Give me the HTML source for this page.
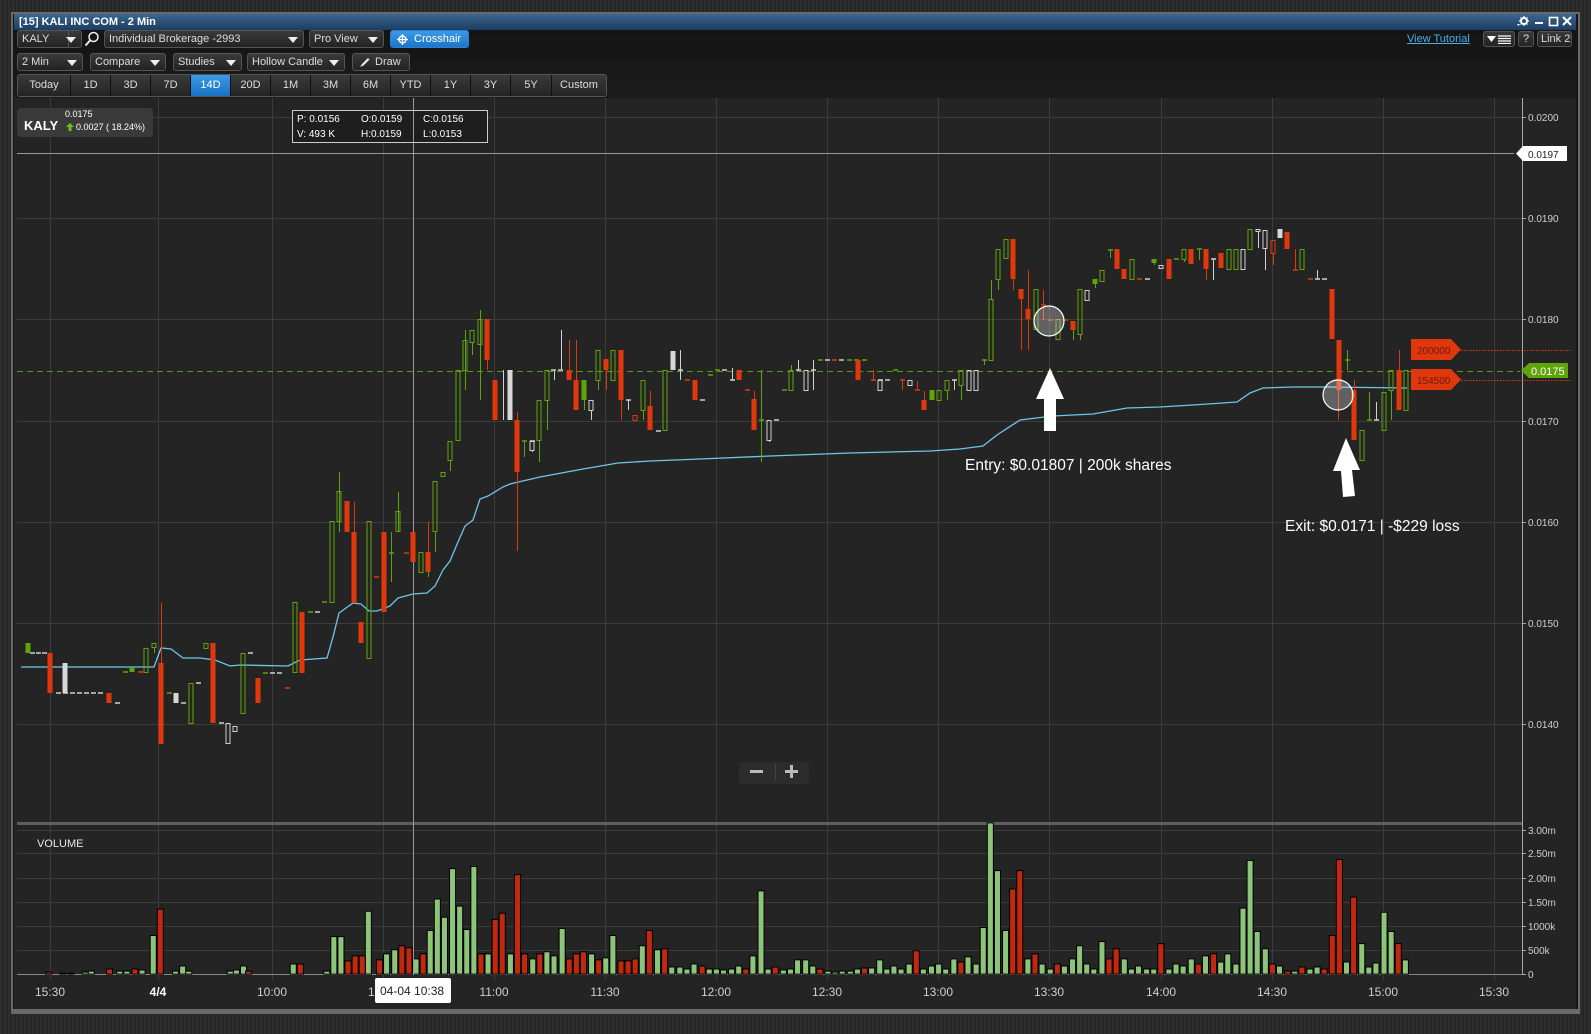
<!DOCTYPE html>
<html><head><meta charset="utf-8"><style>
*{margin:0;padding:0;box-sizing:border-box}
body{width:1591px;height:1034px;overflow:hidden;font-family:"Liberation Sans",Arial,sans-serif;background:repeating-linear-gradient(90deg,#2e2e2e 0,#2e2e2e 2px,#262626 2px,#262626 4px);position:relative}
.abs{position:absolute}
.win{left:11px;top:12px;width:1569px;height:1002px;border:2px solid #6a6a6a;background:#151515}
.title{left:14px;top:14px;width:1562px;height:16px;background:linear-gradient(#3a6690,#1c3d60);color:#fff;font-size:11px;font-weight:bold;line-height:16px;padding-left:5px}
.tb{left:14px;top:30px;width:1562px;height:68px;background:linear-gradient(#141414,#1c1c1c)}
.btn{position:absolute;height:18px;border:1px solid #555;border-radius:3px;background:linear-gradient(#3a3a3a,#232323);color:#ddd;font-size:11px;line-height:16px;padding-left:4px;white-space:nowrap}
.dd::after{content:"";position:absolute;right:5px;top:6px;border-left:5px solid transparent;border-right:5px solid transparent;border-top:6px solid #eee}
.seg{position:absolute;top:75px;height:21px;border-right:1px solid #111;background:linear-gradient(#3a3a3a,#242424);color:#ddd;font-size:11px;line-height:21px;text-align:center}
</style></head><body>
<div class="abs win"></div>
<div class="abs title">[15] KALI INC COM - 2 Min</div>
<svg class="abs" style="left:1510px;top:14px" width="66" height="16">
<g fill="#fff" stroke="#fff"><circle cx="14" cy="7" r="3" fill="none" stroke-width="2"/><path d="M14 2v2M14 10v2M9 7h2M17 7h2M10.5 3.5l1.5 1.5M16 9l1.5 1.5M17.5 3.5L16 5M12 9l-1.5 1.5" stroke-width="1.2"/><path d="M7 10l3 0-1.5 2z" stroke="none"/>
<rect x="25" y="8" width="8" height="2" stroke="none"/><rect x="39.5" y="3.5" width="8" height="8" fill="none" stroke-width="1.6"/><path d="M53 3l8 8M61 3l-8 8" stroke-width="2"/></g></svg>
<div class="abs tb"></div>
<div class="btn dd" style="left:17px;top:30px;width:65px">KALY<span style="position:absolute;left:50px;top:0;height:16px;border-left:1px solid #555"></span></div>
<svg class="abs" style="left:84px;top:31px" width="16" height="16"><circle cx="9.5" cy="6" r="4.5" fill="none" stroke="#eee" stroke-width="1.5"/><path d="M6.5 9l-5 5.5" stroke="#eee" stroke-width="2"/></svg>
<div class="btn dd" style="left:104px;top:30px;width:200px">Individual Brokerage -2993</div>
<div class="btn dd" style="left:309px;top:30px;width:75px">Pro View</div>
<div class="btn" style="left:390px;top:30px;width:79px;background:linear-gradient(#3a9ae8,#1d74c8);border-color:#2a80d0;color:#fff;padding-left:0">
<svg style="position:absolute;left:6px;top:3px" width="11" height="11"><circle cx="5.5" cy="5.5" r="3.5" fill="none" stroke="#fff" stroke-width="1.4"/><path d="M5.5 0v11M0 5.5h11" stroke="#fff" stroke-width="1.2"/></svg><span style="position:absolute;left:23px">Crosshair</span></div>
<div class="abs" style="left:1407px;top:33px;color:#4ab0e8;font-size:11px;text-decoration:underline">View Tutorial</div>
<div class="btn" style="left:1483px;top:31px;width:32px;height:16px"><svg style="position:absolute;left:3px;top:3px" width="26" height="9"><path d="M0 1h9L4.5 7z" fill="#fff"/><path d="M11 1h13M11 3.5h13M11 6h13M11 8.5h13" stroke="#fff" stroke-width="1.2"/></svg></div>
<div class="btn" style="left:1518px;top:31px;width:16px;height:16px;padding-left:4px;line-height:14px">?</div>
<div class="btn" style="left:1537px;top:31px;width:35px;height:16px;padding-left:3px;line-height:14px">Link 2</div>
<div class="btn dd" style="left:17px;top:53px;width:66px">2 Min</div>
<div class="btn dd" style="left:90px;top:53px;width:76px">Compare</div>
<div class="btn dd" style="left:173px;top:53px;width:69px">Studies</div>
<div class="btn dd" style="left:247px;top:53px;width:98px">Hollow Candle</div>
<div class="btn" style="left:352px;top:53px;width:58px;padding-left:22px">Draw<svg style="position:absolute;left:6px;top:3px" width="11" height="11"><path d="M1 10l2-3 6-6 1.5 1.5-6 6z" fill="#eee"/></svg></div>
<div class="abs" style="left:17px;top:74px;width:590px;height:23px;border:1px solid #555;border-radius:3px;background:#222"></div>
<div class="seg" style="left:18px;width:53px">Today</div><div class="seg" style="left:71px;width:40px">1D</div><div class="seg" style="left:111px;width:40px">3D</div><div class="seg" style="left:151px;width:40px">7D</div><div class="seg" style="left:191px;width:40px;background:linear-gradient(#3a9ae8,#1a70c4);color:#fff">14D</div><div class="seg" style="left:231px;width:40px">20D</div><div class="seg" style="left:271px;width:40px">1M</div><div class="seg" style="left:311px;width:40px">3M</div><div class="seg" style="left:351px;width:40px">6M</div><div class="seg" style="left:391px;width:40px">YTD</div><div class="seg" style="left:431px;width:40px">1Y</div><div class="seg" style="left:471px;width:40px">3Y</div><div class="seg" style="left:511px;width:41px">5Y</div><div class="seg" style="left:552px;width:54px;border-right:none">Custom</div>

<svg class="abs" style="left:0;top:0" width="1591" height="1034" font-family="Liberation Sans, Arial, sans-serif">
<rect x="14" y="98" width="1562" height="912" fill="#242424"/>
<rect x="11" y="1009" width="1569" height="3" fill="#6a6a6a"/>
<g stroke="#3c3c3c" stroke-width="1">
<path d="M17 117.5H1522M17 218.5H1522M17 319.5H1522M17 421.5H1522M17 522.5H1522M17 623.5H1522M17 724.5H1522"/>
<path d="M17 830.5H1522M17 853.5H1522M17 878.5H1522M17 902.5H1522M17 926.5H1522M17 950.5H1522"/>
<path d="M50.5 98V980M158.5 98V980M272.5 98V980M383.5 98V980M494.5 98V980M605.5 98V980M716.5 98V980M827.5 98V980M938.5 98V980M1049.5 98V980M1161.5 98V980M1272.5 98V980M1383.5 98V980M1494.5 98V980"/>
</g>
<rect x="17" y="822" width="1505" height="3" fill="#5e5e5e"/>
<path d="M17 974.5H1522" stroke="#888"/>
<path d="M1522.5 98V975" stroke="#aaa"/>
<g stroke="#aaa"><path d="M1522 117.5h4M1522 218.5h4M1522 319.5h4M1522 421.5h4M1522 522.5h4M1522 623.5h4M1522 724.5h4M1522 830.5h4M1522 853.5h4M1522 878.5h4M1522 902.5h4M1522 926.5h4M1522 950.5h4M1522 974.5h4"/></g>
<g fill="#cfcfcf" font-size="10">
<text x="1528" y="121">0.0200</text><text x="1528" y="222">0.0190</text><text x="1528" y="323">0.0180</text><text x="1528" y="425">0.0170</text><text x="1528" y="526">0.0160</text><text x="1528" y="627">0.0150</text><text x="1528" y="728">0.0140</text>
<text x="1528" y="834">3.00m</text><text x="1528" y="857">2.50m</text><text x="1528" y="882">2.00m</text><text x="1528" y="906">1.50m</text><text x="1528" y="930">1000k</text><text x="1528" y="954">500k</text><text x="1528" y="978">0</text>
</g>
<g fill="#cfcfcf" font-size="12" text-anchor="middle">
<text x="50" y="996">15:30</text><text x="158" y="996" fill="#fff" font-weight="bold">4/4</text><text x="272" y="996">10:00</text><text x="383" y="996">10:30</text><text x="494" y="996">11:00</text><text x="605" y="996">11:30</text><text x="716" y="996">12:00</text><text x="827" y="996">12:30</text><text x="938" y="996">13:00</text><text x="1049" y="996">13:30</text><text x="1161" y="996">14:00</text><text x="1272" y="996">14:30</text><text x="1383" y="996">15:00</text><text x="1494" y="996">15:30</text>
</g>
<text x="37" y="847" fill="#e8e8e8" font-size="11">VOLUME</text>

<!-- volume bars -->
<g transform="scale(1.0147)" stroke="#000" stroke-width="1">
<g fill="#8cc47a">
<path d="M59 959h6v1h-6zM67 959h6v1h-6zM81 958h6v2h-6zM87 957h6v3h-6zM115 957h6v3h-6zM122 957h6v3h-6zM137 956h6v4h-6zM148 922h6v38h-6zM170 957h6v3h-6zM177 952h6v8h-6zM183 957h6v3h-6zM224 957h6v3h-6zM230 956h6v4h-6zM237 952h6v8h-6zM286 950h6v10h-6zM319 957h6v3h-6zM326 923h6v37h-6zM333 923h6v37h-6zM360 898h6v62h-6zM378 940h6v20h-6zM386 936h6v24h-6zM407 945h6v15h-6zM421 917h6v43h-6zM428 886h6v74h-6zM435 904h6v56h-6zM443 856h6v104h-6zM450 893h6v67h-6zM457 916h6v44h-6zM464 854h6v106h-6zM478 940h6v20h-6zM500 940h6v20h-6zM522 945h6v15h-6zM536 938h6v22h-6zM543 942h6v18h-6zM551 915h6v45h-6zM580 940h6v20h-6zM594 944h6v16h-6zM601 922h6v38h-6zM630 932h6v28h-6zM645 936h6v24h-6zM659 953h6v7h-6zM667 953h6v7h-6zM674 955h6v5h-6zM681 950h6v10h-6zM696 955h6v5h-6zM703 955h6v5h-6zM710 956h6v4h-6zM718 955h6v5h-6zM725 952h6v8h-6zM739 942h6v18h-6zM747 878h6v82h-6zM754 955h6v5h-6zM769 956h6v4h-6zM776 955h6v5h-6zM783 946h6v14h-6zM791 946h6v14h-6zM798 952h6v8h-6zM813 957h6v3h-6zM820 958h6v2h-6zM827 957h6v3h-6zM835 957h6v3h-6zM842 955h6v5h-6zM856 954h6v6h-6zM864 946h6v14h-6zM871 955h6v5h-6zM878 952h6v8h-6zM885 955h6v5h-6zM893 950h6v10h-6zM907 955h6v5h-6zM915 952h6v8h-6zM922 950h6v10h-6zM929 955h6v5h-6zM937 945h6v15h-6zM951 943h6v17h-6zM959 950h6v10h-6zM966 914h6v46h-6zM973 811h6v149h-6zM980 858h6v102h-6zM988 917h6v43h-6zM1010 945h6v15h-6zM1024 950h6v10h-6zM1032 955h6v5h-6zM1046 952h6v8h-6zM1054 945h6v15h-6zM1061 932h6v28h-6zM1068 950h6v10h-6zM1075 955h6v5h-6zM1083 928h6v32h-6zM1105 945h6v15h-6zM1112 955h6v5h-6zM1119 952h6v8h-6zM1127 955h6v5h-6zM1134 955h6v5h-6zM1149 955h6v5h-6zM1156 950h6v10h-6zM1163 952h6v8h-6zM1171 945h6v15h-6zM1185 942h6v18h-6zM1200 948h6v12h-6zM1207 940h6v20h-6zM1215 950h6v10h-6zM1222 895h6v65h-6zM1229 848h6v112h-6zM1236 918h6v42h-6zM1244 935h6v25h-6zM1258 952h6v8h-6zM1273 957h6v3h-6zM1288 955h6v5h-6zM1295 953h6v7h-6zM1324 948h6v12h-6zM1339 930h6v30h-6zM1346 953h6v7h-6zM1353 949h6v11h-6zM1361 899h6v61h-6zM1368 918h6v42h-6zM1382 946h6v14h-6z"/>
</g>
<g fill="#c0290f">
<path d="M45 958h6v2h-6zM105 955h6v5h-6zM130 955h6v5h-6zM155 896h6v64h-6zM242 957h6v3h-6zM293 950h6v10h-6zM340 947h6v13h-6zM347 942h6v18h-6zM354 942h6v18h-6zM371 946h6v14h-6zM393 932h6v28h-6zM400 934h6v26h-6zM414 940h6v20h-6zM471 940h6v20h-6zM485 906h6v54h-6zM492 900h6v60h-6zM507 862h6v98h-6zM514 940h6v20h-6zM529 940h6v20h-6zM558 945h6v15h-6zM565 940h6v20h-6zM572 938h6v22h-6zM587 946h6v14h-6zM609 947h6v13h-6zM616 947h6v13h-6zM623 945h6v15h-6zM637 917h6v43h-6zM652 935h6v25h-6zM689 952h6v8h-6zM732 955h6v5h-6zM761 953h6v7h-6zM805 955h6v5h-6zM849 954h6v6h-6zM900 937h6v23h-6zM944 948h6v12h-6zM995 876h6v84h-6zM1002 858h6v102h-6zM1017 940h6v20h-6zM1039 950h6v10h-6zM1090 945h6v15h-6zM1097 935h6v25h-6zM1141 930h6v30h-6zM1178 950h6v10h-6zM1193 940h6v20h-6zM1251 950h6v10h-6zM1266 957h6v3h-6zM1280 953h6v7h-6zM1302 955h6v5h-6zM1310 922h6v38h-6zM1317 847h6v113h-6zM1331 884h6v76h-6zM1375 930h6v30h-6z"/>
</g>
</g>

<!-- VWAP -->
<polyline fill="none" stroke="#6ec6ea" stroke-width="1.3" points="21,667 154,667 161,648 171,649 183,658 200,658 215,660 230,666 240,665 288,666 300,660 327,658 333,637 339,613 353,603 361,604 369,611 377,611 390,606 398,598 413,594 427,593 435,586 443,570 450,561 458,542 465,526 473,520 480,499 488,496 503,487 510,484 540,477 583,469 618,463 650,461 700,459 770,456 850,453 930,451 960,449 983,446 997,435 1020,420 1053,416 1093,414 1127,408 1160,407 1193,405 1237,402 1250,393 1263,388 1293,387 1327,387 1407,388"/>

<!-- green dashed current price -->
<path d="M17 371.5H1520" stroke="#5a9a10" stroke-dasharray="6 4"/>
<path d="M1461 350.5H1572M1461 380.5H1572" stroke="#e0380c" stroke-dasharray="1.5 1.5"/>

<!-- crosshair -->
<path d="M413.5 98V975" stroke="#9a9a9a"/>
<path d="M17 153.5H1514" stroke="#9a9a9a"/>

<!-- wicks -->
<g stroke-width="1">
<path stroke="#5fa40a" d="M154.5 647V653M339.5 472V532M391.5 532V582M398.5 492V531M428.5 522V577M435.5 531V552M450.5 460V471M465.5 330V390M472.5 342V355M480.5 310V400M524.5 441V457M539.5 440V462M547.5 400V430M584.5 400V410M598.5 380V390M643.5 410V420M761.5 370V462M791.5 365V370M947.5 390V400M961.5 385V400M984.5 360V365M991.5 280V299M998.5 279V290M1073.5 330V340M1080.5 334V340M1095.5 284V288M1110.5 250V258M1154.5 263V265M1184.5 259V262M1199.5 249V260M1347.5 350V370M1369.5 392V420M1391.5 390V420"/>
<path stroke="#e0380c" d="M161.5 603V744M347.5 502V532M354.5 502V532M428.5 522V552M487.5 360V370M517.5 412V551M569.5 340V370M576.5 340V380M606.5 370V390M621.5 400V420M650.5 391V406M754.5 391V399M873.5 370V380M902.5 380V390M917.5 381V390M924.5 391V400M1013.5 279V290M1021.5 299V350M1028.5 270V350M1043.5 290V320M1206.5 269V280M1273.5 253V265M1295.5 249V270M1354.5 380V390M1399.5 350V370M1338.5 390V420"/>
<path stroke="#d0d0d0" d="M503.5 370V420M532.5 450V452M554.5 370V380M561.5 330V370M591.5 410V420M628.5 400V410M680.5 350V380M732.5 368V380M769.5 440V442M798.5 360V370M813.5 360V390M954.5 380V390M1213.5 259V280M1258.5 231V248M1265.5 248V270M1317.5 270V279M1376.5 402V420"/>
</g>
<!-- dashes -->
<path stroke="#d0d0d0" stroke-width="1.5" d="M30 653h5M36 653h5M42 653h5M56 693h5M63 693h5M70 693h5M77 693h5M84 693h5M91 693h5M98 693h5M115 703h5M181 703h5M196 683h5M219 723h5M248 653h5M270 673h5M277 673h5M315 612h5M530 441h5M551 370h5M558 370h5M626 400h5M656 431h5M678 370h5M700 400h5M722 370h5M730 380h5M774 420h5M796 370h5M811 370h5M825 360h5M839 360h5M878 380h5M885 380h5M952 380h5M1211 259h5M1145 279h5M1315 279h5M1322 279h5M1374 420h5"/>
<path stroke="#5fa40a" stroke-width="1.5" d="M123 672h5M167 693h5M263 673h5M308 612h5M322 602h5M389 553h5M522 441h5M708 375h5M715 370h5M759 420h5M782 390h5M818 360h5M847 360h5M854 360h5M862 360h5M893 370h5M982 360h5M1108 250h5M1174 259h5M1197 249h5M1345 360h5M1367 420h5"/>
<path stroke="#e0380c" stroke-width="1.5" d="M138 672h5M285 688h5M374 577h5M404 553h5M685 380h5M745 390h5M832 360h5M871 380h5M900 380h5M915 390h5M1041 305h5M1048 320h5M1063 320h5M1137 279h5M1293 270h5M1308 279h5"/>

<!-- filled bodies -->
<g fill="#e0380c">
<rect x="47.5" y="653" width="5" height="40"/><rect x="106.5" y="693" width="5" height="10"/><rect x="158.5" y="663" width="5" height="81"/><rect x="210.5" y="643" width="5" height="80"/><rect x="255.5" y="678" width="5" height="25"/><rect x="299.5" y="612" width="5" height="61"/><rect x="344.5" y="501" width="5" height="31"/><rect x="351.5" y="532" width="5" height="71"/><rect x="358.5" y="622" width="5" height="21"/><rect x="381.5" y="532" width="5" height="80"/><rect x="410.5" y="532" width="5" height="30"/><rect x="425.5" y="552" width="5" height="20"/><rect x="484.5" y="319" width="5" height="41"/><rect x="492.5" y="380" width="5" height="40"/><rect x="514.5" y="420" width="5" height="52"/><rect x="566.5" y="370" width="5" height="10"/><rect x="573.5" y="380" width="5" height="30"/><rect x="603.5" y="359" width="5" height="11"/><rect x="618.5" y="350" width="5" height="50"/><rect x="647.5" y="406" width="5" height="24"/><rect x="692.5" y="380" width="5" height="20"/><rect x="736.5" y="370" width="5" height="10"/><rect x="751.5" y="399" width="5" height="31"/><rect x="855.5" y="360" width="5" height="20"/><rect x="921.5" y="400" width="5" height="10"/><rect x="1010.5" y="239" width="5" height="40"/><rect x="1018.5" y="289" width="5" height="10"/><rect x="1025.5" y="309" width="5" height="10"/><rect x="1070.5" y="321" width="5" height="9"/><rect x="1114.5" y="249" width="5" height="20"/><rect x="1121.5" y="269" width="5" height="10"/><rect x="1166.5" y="259" width="5" height="20"/><rect x="1188.5" y="249" width="5" height="15"/><rect x="1203.5" y="249" width="5" height="20"/><rect x="1218.5" y="253" width="5" height="15"/><rect x="1284.5" y="232" width="5" height="17"/><rect x="1329.5" y="289" width="5" height="50"/><rect x="1336.5" y="340" width="5" height="50"/><rect x="1351.5" y="390" width="5" height="50"/><rect x="1396.5" y="370" width="5" height="40"/>
</g>
<g fill="none" stroke="#e0380c"><rect x="633" y="415.5" width="4" height="5"/><rect x="1271" y="240.5" width="4" height="13"/></g>
<g fill="#5fa40a"><rect x="25.5" y="643" width="5" height="10"/><rect x="129.5" y="668" width="5" height="4"/><rect x="581.5" y="380" width="5" height="20"/><rect x="929.5" y="390" width="5" height="10"/><rect x="1092.5" y="279" width="5" height="5"/><rect x="1151.5" y="259" width="5" height="4"/></g>
<g fill="#d8d8d8"><rect x="62.5" y="663" width="5" height="30"/><rect x="173.5" y="693" width="5" height="10"/><rect x="507.5" y="370" width="5" height="50"/><rect x="670.5" y="351" width="5" height="19"/><rect x="1277.5" y="229" width="5" height="9"/></g>
<!-- hollow green -->
<g fill="none" stroke="#5fa40a" stroke-width="1">
<rect x="144" y="648.5" width="4" height="24"/><rect x="152" y="643.5" width="4" height="4"/><rect x="189" y="683.5" width="4" height="40"/><rect x="204" y="643.5" width="4" height="5"/><rect x="241" y="653.5" width="4" height="60"/><rect x="293" y="602.5" width="4" height="70"/><rect x="330" y="521.5" width="4" height="81"/><rect x="337" y="491.5" width="4" height="30"/><rect x="367" y="521.5" width="4" height="137"/><rect x="396" y="511.5" width="4" height="20"/><rect x="419" y="552.5" width="4" height="20"/><rect x="433" y="481.5" width="4" height="50"/><rect x="441" y="472.5" width="4" height="4"/><rect x="448" y="441.5" width="4" height="19"/><rect x="456" y="370.5" width="4" height="70"/><rect x="463" y="340.5" width="4" height="30"/><rect x="470" y="330.5" width="4" height="12"/><rect x="478" y="319.5" width="4" height="25"/>
<rect x="537" y="400.5" width="4" height="40"/><rect x="545" y="370.5" width="4" height="30"/><rect x="596" y="350.5" width="4" height="30"/><rect x="611" y="350.5" width="4" height="30"/><rect x="641" y="380.5" width="4" height="30"/><rect x="663" y="370.5" width="4" height="60"/><rect x="789" y="370.5" width="4" height="20"/><rect x="937" y="390.5" width="4" height="10"/><rect x="945" y="380.5" width="4" height="10"/><rect x="959" y="370.5" width="4" height="15"/>
<rect x="989" y="299.5" width="4" height="61"/><rect x="996" y="249.5" width="4" height="30"/><rect x="1004" y="239.5" width="4" height="19"/><rect x="1034" y="289.5" width="4" height="40"/><rect x="1056" y="319.5" width="4" height="20"/><rect x="1078" y="289.5" width="4" height="45"/><rect x="1100" y="270.5" width="4" height="11"/><rect x="1130" y="259.5" width="4" height="20"/><rect x="1182" y="249.5" width="4" height="10"/><rect x="1227" y="249.5" width="4" height="20"/><rect x="1234" y="249.5" width="4" height="20"/><rect x="1248" y="229.5" width="4" height="20"/><rect x="1300" y="249.5" width="4" height="20"/><rect x="1360" y="430.5" width="4" height="30"/><rect x="1382" y="392.5" width="4" height="38"/><rect x="1389" y="370.5" width="4" height="20"/><rect x="1404" y="370.5" width="4" height="40"/>
</g>
<g fill="none" stroke="#d0d0d0" stroke-width="1">
<rect x="226" y="723.5" width="4" height="20"/><rect x="233" y="726.5" width="4" height="5"/><rect x="530" y="441.5" width="4" height="9"/><rect x="589" y="400.5" width="4" height="10"/><rect x="767" y="420.5" width="4" height="20"/><rect x="804" y="370.5" width="4" height="20"/><rect x="878" y="380.5" width="4" height="10"/><rect x="908" y="380.5" width="4" height="5"/><rect x="967" y="370.5" width="4" height="20"/><rect x="974" y="370.5" width="4" height="20"/><rect x="1085" y="290.5" width="4" height="10"/><rect x="1159" y="265.5" width="4" height="3"/><rect x="1241" y="249.5" width="4" height="20"/><rect x="1256" y="229.5" width="4" height="2"/><rect x="1263" y="230.5" width="4" height="18"/>
</g>

<!-- circles -->
<circle cx="1049" cy="321" r="15" fill="rgba(255,255,255,0.28)" stroke="#fff" stroke-width="1.2"/>
<circle cx="1338" cy="395" r="15" fill="rgba(255,255,255,0.28)" stroke="#fff" stroke-width="1.2"/>
<!-- arrows -->
<path d="M1050 368L1064 399H1056V431H1044V399H1036Z" fill="#fff"/>
<path d="M1346 438L1360 470L1352 470L1355 496L1343 497L1341 471L1333 471Z" fill="#fff"/>
<text x="965" y="470" fill="#fff" font-size="15.5">Entry: $0.01807 | 200k shares</text>
<text x="1285" y="531" fill="#fff" font-size="15.5">Exit: $0.0171 | -$229 loss</text>

<!-- right tags -->
<path d="M1411 339H1451L1461 349.5L1451 360H1411Z" fill="#e0380c"/>
<path d="M1411 369H1451L1461 379.5L1451 390H1411Z" fill="#e0380c"/>
<text x="1417" y="354" fill="#6a1a05" font-size="10">200000</text>
<text x="1417" y="384" fill="#6a1a05" font-size="10">154500</text>
<path d="M1529 363H1568V378H1529L1521 370.5Z" fill="#5fa40a"/>
<text x="1531" y="375" fill="#fff" font-size="11">0.0175</text>
<path d="M1523 146H1567V161H1523L1516 153.5Z" fill="#fff"/>
<text x="1528" y="158" fill="#222" font-size="10">0.0197</text>

<!-- KALY badge -->
<rect x="17" y="108" width="136" height="29" rx="4" fill="#3a3a3a"/>
<text x="24" y="130" fill="#fff" font-size="13" font-weight="bold">KALY</text>
<text x="65" y="117" fill="#fff" font-size="9">0.0175</text>
<path d="M70 123l4 4h-2.5v4h-3v-4H66z" fill="#6cc020"/>
<text x="76" y="130" fill="#fff" font-size="9">0.0027 ( 18.24%)</text>
<!-- info box -->
<rect x="292.5" y="110.5" width="195" height="32" fill="#1e1e1e" stroke="#ccc"/>
<g fill="#fff" font-size="10"><text x="297" y="122">P: 0.0156</text><text x="361" y="122">O:0.0159</text><text x="423" y="122">C:0.0156</text><text x="297" y="137">V: 493 K</text><text x="361" y="137">H:0.0159</text><text x="423" y="137">L:0.0153</text></g>
<path d="M413.5 111V142" stroke="#9a9a9a"/>

<!-- zoom buttons -->
<rect x="739" y="762" width="70" height="22" rx="3" fill="#2c2c2c"/>
<path d="M750 771.5h13M785 771.5h13M791.5 765v13" stroke="#bbb" stroke-width="3"/>
<path d="M775.5 764v16" stroke="#444"/>

<!-- time tooltip -->
<rect x="375" y="978" width="76" height="25" rx="2" fill="#fff"/>
<text x="380" y="995" fill="#222" font-size="12">04-04 10:38</text>
</svg>
</body></html>
